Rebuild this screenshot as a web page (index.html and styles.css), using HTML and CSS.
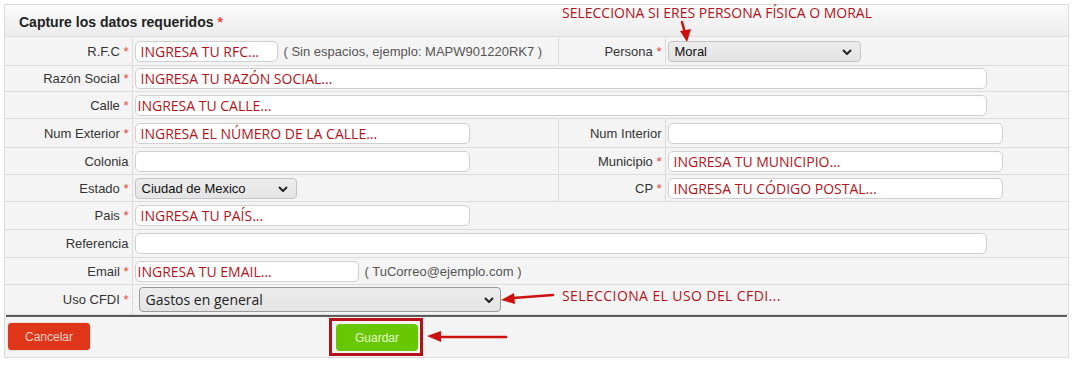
FILE: index.html
```html
<!DOCTYPE html>
<html lang="es">
<head>
    <meta charset="UTF-8">
    <meta name="viewport" content="width=device-width, initial-scale=1.0">
    <title>Datos de facturación</title>
    <link rel="stylesheet" href="styles.css">
</head>
<body>
    <div class="panel">
        <div class="panel-head">Capture los datos requeridos <span class="req">*</span></div>

        <table class="form-table">
            <colgroup>
                <col class="c-label">
                <col class="c-value">
                <col class="c-label2">
                <col class="c-value2">
            </colgroup>
            <tr class="tall">
                <td class="label">R.F.C <span class="req">*</span></td>
                <td class="value"><input class="field w-rfc" placeholder="INGRESA TU RFC..."><span class="hint">( Sin espacios, ejemplo: MAPW901220RK7 )</span></td>
                <td class="label">Persona <span class="req">*</span></td>
                <td class="value">
                    <span class="select w-persona">Moral
                        <svg class="chev" viewBox="0 0 10 6"><path d="M1 1l4 4 4-4"/></svg>
                    </span>
                </td>
            </tr>
            <tr class="short">
                <td class="label">Razón Social <span class="req">*</span></td>
                <td class="value" colspan="3"><input class="field w-wide" placeholder="INGRESA TU RAZÓN SOCIAL..."></td>
            </tr>
            <tr>
                <td class="label">Calle <span class="req">*</span></td>
                <td class="value" colspan="3"><input class="field w-wide tight" placeholder="INGRESA TU CALLE..."></td>
            </tr>
            <tr class="tall">
                <td class="label">Num Exterior <span class="req">*</span></td>
                <td class="value"><input class="field w-half" placeholder="INGRESA EL NÚMERO DE LA CALLE..."></td>
                <td class="label">Num Interior</td>
                <td class="value"><input class="field w-half"></td>
            </tr>
            <tr>
                <td class="label">Colonia</td>
                <td class="value"><input class="field w-half"></td>
                <td class="label">Municipio <span class="req">*</span></td>
                <td class="value"><input class="field w-half" placeholder="INGRESA TU MUNICIPIO..."></td>
            </tr>
            <tr>
                <td class="label">Estado <span class="req">*</span></td>
                <td class="value">
                    <span class="select w-estado">Ciudad de Mexico
                        <svg class="chev" viewBox="0 0 10 6"><path d="M1 1l4 4 4-4"/></svg>
                    </span>
                </td>
                <td class="label">CP <span class="req">*</span></td>
                <td class="value"><input class="field w-half" placeholder="INGRESA TU CÓDIGO POSTAL..."></td>
            </tr>
            <tr class="mid">
                <td class="label">Pais <span class="req">*</span></td>
                <td class="value" colspan="3"><input class="field w-half" placeholder="INGRESA TU PAÍS..."></td>
            </tr>
            <tr class="mid">
                <td class="label">Referencia</td>
                <td class="value" colspan="3"><input class="field w-wide"></td>
            </tr>
            <tr>
                <td class="label">Email <span class="req">*</span></td>
                <td class="value" colspan="3"><input class="field w-email tight" placeholder="INGRESA TU EMAIL..."><span class="hint">( TuCorreo@ejemplo.com )</span></td>
            </tr>
            <tr class="row-cfdi">
                <td class="label">Uso CFDI <span class="req">*</span></td>
                <td class="value" colspan="3">
                    <span class="select select-lg w-cfdi">Gastos en general
                        <svg class="chev" viewBox="0 0 10 6"><path d="M1 1l4 4 4-4"/></svg>
                    </span>
                </td>
            </tr>
        </table>

        <div class="panel-foot">
            <button class="btn btn-cancel">Cancelar</button>
            <button class="btn btn-save">Guardar</button>
        </div>

        <!-- notas rojas sobre la captura -->
        <div class="note note-persona">SELECCIONA SI ERES PERSONA FÍSICA O MORAL</div>
        <div class="note note-cfdi">SELECCIONA EL USO DEL CFDI...</div>
        <div class="mark-box"></div>
        <svg class="arrows" viewBox="0 0 1065 356">
            <g stroke="#cc1010" stroke-width="2.5" fill="none" stroke-linecap="round">
                <path d="M677 17 L680 28"/>
                <path d="M548 290 L508 293"/>
                <path d="M501 332 L433 332"/>
            </g>
            <g fill="#cc1010">
                <path d="M682 37 L675 26 L686 24 Z"/>
                <path d="M496 295 L509 288 L510 299 Z"/>
                <path d="M422 331 L436 326 L436 337 Z"/>
            </g>
        </svg>
    </div>
</body>
</html>
```

FILE: styles.css
```css
body {
    margin: 0;
    background-color: #fff;
    font-family: "Liberation Sans", Arial, sans-serif;
    font-size: 13px;
    color: #333;
}

.panel {
    position: relative;
    width: 1063px;
    margin: 4px 0 0 4px;
    border: 1px solid #dcdcdc;
    background-color: #f4f4f4;
}

.panel-head {
    height: 31px;
    line-height: 35px;
    padding-left: 14px;
    font-size: 14px;
    font-weight: bold;
    color: #222;
    background: linear-gradient(#fbfbfb, #ececec);
    border-bottom: 1px solid #dcdcdc;
}

.req {
    color: #e8463c;
    font-weight: normal;
}

.panel-head .req {
    font-weight: bold;
}

.form-table {
    width: 1063px;
    border-collapse: collapse;
    table-layout: fixed;
}

.c-label { width: 127px; }
.c-value { width: 426px; }
.c-label2 { width: 107px; }
.c-value2 { width: 403px; }

.form-table td {
    height: 26px;
    padding: 0;
    border-bottom: 1px solid #dcdcdc;
    white-space: nowrap;
}

.form-table .short td { height: 25px; }
.form-table .mid td { height: 27px; }
.form-table .tall td { height: 28px; }
.form-table .row-cfdi td { height: 29px; }

.form-table td.label {
    text-align: right;
    padding-right: 3px;
    border-right: 1px solid #dcdcdc;
}

.form-table td.value {
    padding-left: 2px;
    border-right: 1px solid #dcdcdc;
}

.form-table td.value:last-child {
    border-right: none;
}

.field {
    box-sizing: border-box;
    height: 21px;
    padding: 0 5px;
    vertical-align: middle;
    border: 1px solid #cfcfcf;
    border-radius: 5px;
    background-color: #fff;
    font-family: "Open Sans", sans-serif;
    font-size: 14px;
    color: #b3121b;
    outline: none;
}

.field.tight {
    padding-left: 2px;
}

.field::placeholder {
    color: #b3121b;
    opacity: 1;
}

.w-rfc { width: 143px; }
.w-wide { width: 852px; }
.w-half { width: 335px; }
.w-email { width: 224px; }

.hint {
    margin-left: 6px;
    vertical-align: middle;
    color: #555;
}

.select {
    position: relative;
    box-sizing: border-box;
    display: inline-block;
    vertical-align: middle;
    height: 21px;
    line-height: 19px;
    padding-left: 6px;
    border: 1px solid #c4c4c4;
    border-radius: 4px;
    background: linear-gradient(#ececec, #e4e4e4);
    color: #111;
}

.select-lg {
    height: 25px;
    line-height: 23px;
    margin-left: 4px;
    font-family: "Open Sans", sans-serif;
    font-size: 14px;
    color: #222;
    border-color: #9a9a9a;
}

.chev {
    position: absolute;
    right: 8px;
    top: 7px;
    width: 10px;
    height: 6px;
    fill: none;
    stroke: #222;
    stroke-width: 2;
}

.select-lg .chev {
    top: 9px;
    right: 6px;
}

.w-persona { width: 193px; }
.w-estado { width: 162px; }
.w-cfdi { width: 362px; }

.panel-foot {
    box-sizing: border-box;
    height: 42px;
    margin: 0 1px;
    padding-top: 6px;
    border-top: 2px solid #5b5b5b;
    display: flex;
    align-items: flex-start;
}

.btn {
    width: 82px;
    height: 27px;
    border: none;
    border-radius: 4px;
    font-family: "Liberation Sans", Arial, sans-serif;
    font-size: 12px;
    cursor: pointer;
}

.btn-cancel {
    margin-left: 2px;
    background-color: #df3519;
    color: #f7d2c8;
    box-shadow: 0 0 1px #b22;
}

.btn-save {
    margin-left: 246px;
    margin-top: 1px;
    background-color: #67c700;
    color: #e4f8cf;
}

.note {
    position: absolute;
    font-family: "Open Sans", sans-serif;
    font-size: 14px;
    color: #b3121b;
    white-space: nowrap;
}

.note-persona {
    left: 557px;
    top: -2px;
}

.note-cfdi {
    left: 557px;
    top: 281px;
    letter-spacing: 0.4px;
}

.mark-box {
    position: absolute;
    left: 324px;
    top: 313px;
    width: 88px;
    height: 32px;
    border: 3px solid #b3121b;
}

.arrows {
    position: absolute;
    left: 0;
    top: 0;
    width: 1065px;
    height: 356px;
    pointer-events: none;
}
```
